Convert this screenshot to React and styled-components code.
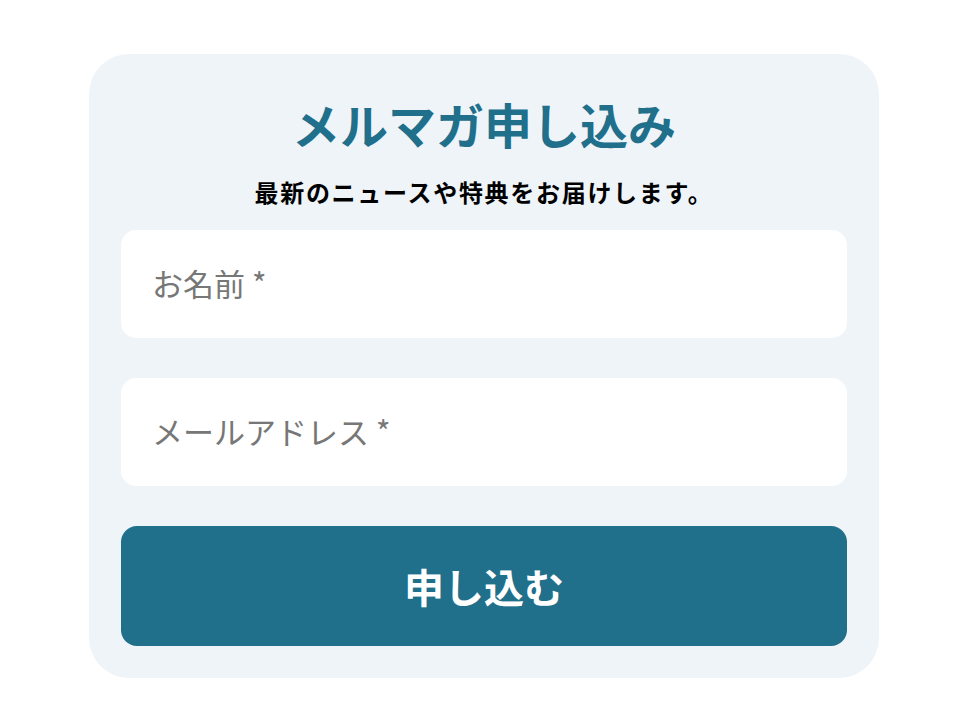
import React from "react";
import styled, { createGlobalStyle } from "styled-components";

const Global = createGlobalStyle`
  html, body { margin: 0; padding: 0; background: #ffffff; }
  body { font-family: "Noto Sans CJK JP", "Noto Sans", sans-serif; }
  * { box-sizing: border-box; }
`;

const Page = styled.div`
  padding: 54px 0 0 89px;
`;

const Card = styled.form`
  width: 790px;
  background: #eff4f9;
  border-radius: 40px;
  padding: 40px 32px 32px;
  display: flex;
  flex-direction: column;
`;

const Title = styled.h2`
  margin: 0;
  text-align: center;
  font-size: 48px;
  line-height: 58px;
  font-weight: 700;
  color: #206f8b;
`;

const Subtitle = styled.p`
  margin: 22px 0 20px;
  text-align: center;
  font-size: 24px;
  line-height: 36px;
  font-weight: 700;
  letter-spacing: 1.7px;
  color: #000000;
`;

const Fields = styled.div`
  display: flex;
  flex-direction: column;
  gap: 40px;
`;

const Input = styled.input`
  width: 100%;
  height: 108px;
  border: none;
  outline: none;
  border-radius: 15px;
  background: #ffffff;
  padding: 0 31px 3px;
  font-family: "Noto Sans CJK JP", "Noto Sans", sans-serif;
  font-size: 31px;
  color: #222;
  &::placeholder {
    color: #777777;
    opacity: 1;
  }
`;

const Button = styled.button`
  width: 100%;
  height: 120px;
  border: none;
  border-radius: 16px;
  background: #206f8b;
  color: #ffffff;
  font-family: "Noto Sans CJK JP", "Noto Sans", sans-serif;
  font-size: 40px;
  font-weight: 700;
  cursor: pointer;
`;

export default function App() {
  return (
    <>
      <Global />
      <Page>
        <Card onSubmit={(e) => e.preventDefault()}>
          <Title>メルマガ申し込み</Title>
          <Subtitle>最新のニュースや特典をお届けします。</Subtitle>
          <Fields>
            <Input type="text" placeholder="お名前 *" />
            <Input type="email" placeholder="メールアドレス *" />
            <Button type="submit">申し込む</Button>
          </Fields>
        </Card>
      </Page>
    </>
  );
}
